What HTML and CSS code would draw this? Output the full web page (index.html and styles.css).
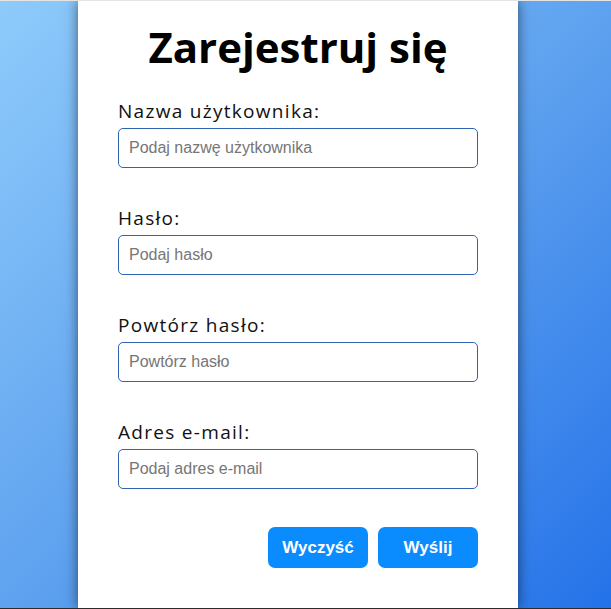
FILE: index.html
```html
<!DOCTYPE html>
<html lang="pl">
<head>
<meta charset="utf-8">
<title>Zarejestruj się</title>
<link rel="stylesheet" href="styles.css">
</head>
<body>
<main class="card">
  <h1 class="title">Zarejestruj się</h1>
  <form class="form">
    <div class="field">
      <label class="label" for="u">Nazwa użytkownika:</label>
      <input class="input" id="u" type="text" placeholder="Podaj nazwę użytkownika">
    </div>
    <div class="field">
      <label class="label" for="p">Hasło:</label>
      <input class="input" id="p" type="password" placeholder="Podaj hasło">
    </div>
    <div class="field">
      <label class="label" for="p2">Powtórz hasło:</label>
      <input class="input" id="p2" type="password" placeholder="Powtórz hasło">
    </div>
    <div class="field">
      <label class="label" for="e">Adres e-mail:</label>
      <input class="input" id="e" type="email" placeholder="Podaj adres e-mail">
    </div>
    <div class="actions">
      <button class="btn" type="reset">Wyczyść</button>
      <button class="btn" type="submit">Wyślij</button>
    </div>
  </form>
</main>
</body>
</html>
```
FILE: styles.css
```css
* { box-sizing: border-box; }
html, body { margin: 0; height: 100%; }
body {
  height: 609px;
  overflow: hidden;
  border-top: 1px solid #e4e4e4;
  border-bottom: 1px solid #2b2b2b;
  background: linear-gradient(135deg, #8ecbfb 0%, #5fa2ef 50%, #2472e9 100%);
  padding-right: 15px;
  font-family: "Open Sans", "Liberation Sans", sans-serif;
}
.card {
  width: 440px;
  height: 100%;
  margin: 0 auto;
  background: #fff;
  box-shadow: 0 0 12px rgba(0, 0, 0, 0.55);
  padding: 22px 40px 0;
}
.title {
  margin: 0 0 28px;
  text-align: center;
  font-family: "Open Sans", "Lato", sans-serif;
  font-weight: 700;
  font-size: 42px;
  line-height: 48px;
  color: #000;
}
.form { display: flex; flex-direction: column; }
.field {
  display: flex;
  flex-direction: column;
  gap: 5px;
  margin-bottom: 38px;
}
.label {
  font-size: 19px;
  line-height: 24px;
  letter-spacing: 1.3px;
  font-weight: 400;
  color: #111;
}
.input {
  width: 360px;
  height: 40px;
  border: 1px solid #2f65b0;
  border-radius: 5px;
  padding: 0 10px;
  font-family: "Liberation Sans", Arial, sans-serif;
  font-size: 16px;
  color: #222;
  outline: none;
}
.input::placeholder { color: #767676; }
.actions {
  display: flex;
  justify-content: flex-end;
  gap: 10px;
}
.btn {
  width: 100px;
  height: 41px;
  border: none;
  border-radius: 7px;
  background: #0a8cff;
  color: #fff;
  font-family: "Liberation Sans", Arial, sans-serif;
  font-weight: 700;
  font-size: 17px;
}
```
